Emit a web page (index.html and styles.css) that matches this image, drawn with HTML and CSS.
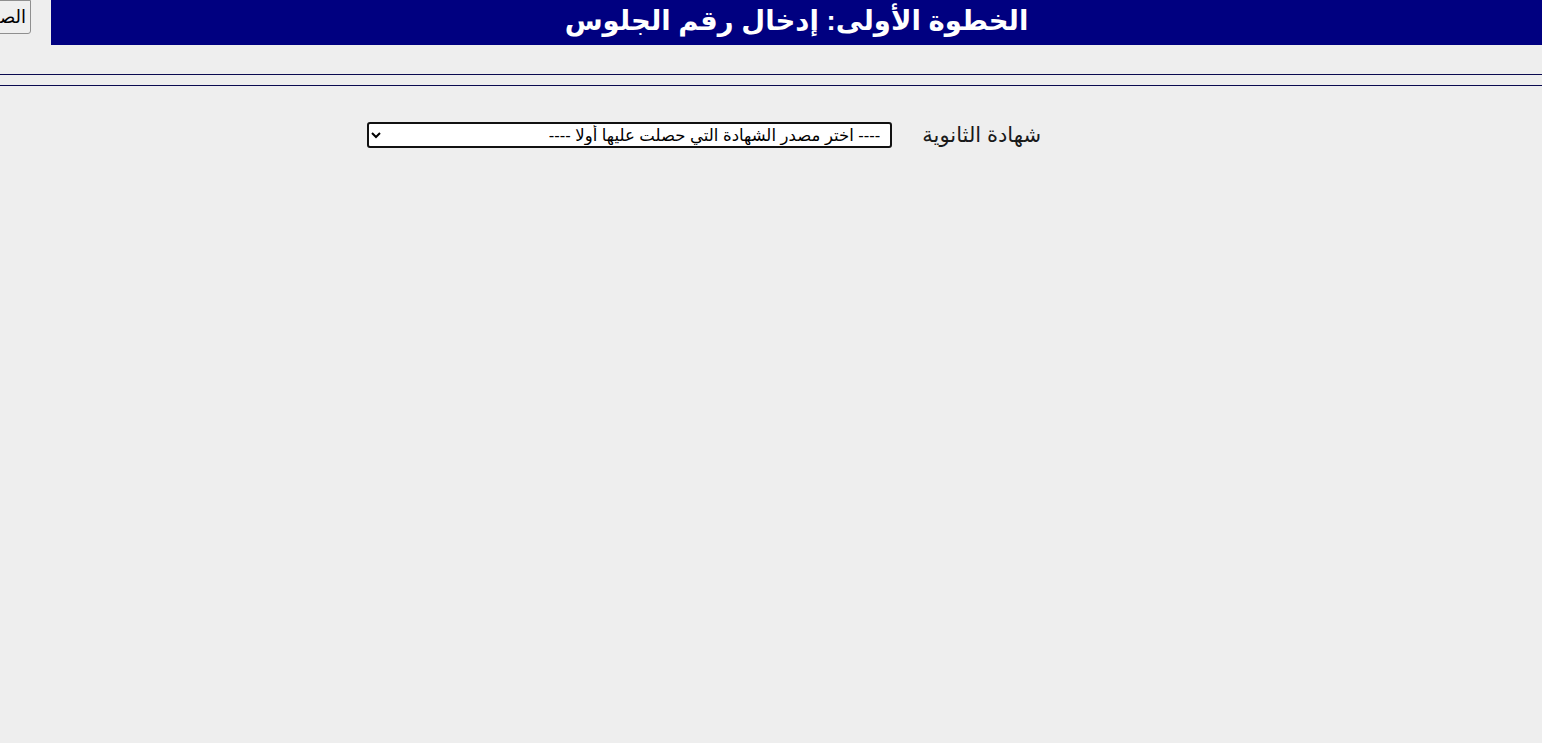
FILE: index.html
```html
<!DOCTYPE html>
<html lang="ar">
<head>
<meta charset="utf-8">
<title>الخطوة الأولى</title>
<link rel="stylesheet" href="styles.css">
</head>
<body>
<div class="top">
  <button class="home" type="button">الصفحة الرئيسية</button>
  <div class="banner">الخطوة الأولى: إدخال رقم الجلوس</div>
</div>
<div class="rule rule-a"></div>
<div class="rule rule-b"></div>
<div class="form-row">
  <label class="label" for="src">شهادة الثانوية</label>
  <select id="src" class="source">
    <option>---- اختر مصدر الشهادة التي حصلت عليها أولا ----</option>
  </select>
</div>
</body>
</html>
```

FILE: styles.css
```css
html, body {
  margin: 0;
  padding: 0;
  background: #eeeeee;
  overflow: hidden;
}
body {
  font-family: "Liberation Sans", Arial, "DejaVu Sans", sans-serif;
  color: #000;
  height: 743px;
}
.top {
  display: flex;
  align-items: flex-start;
  height: 45px;
}
.home {
  flex: 0 0 auto;
  width: 120px;
  height: 34px;
  margin-left: -89px;
  direction: rtl;
  text-align: right;
  padding: 0 4px 0 0;
  font-family: "Liberation Sans", Arial, "DejaVu Sans", sans-serif;
  font-size: 18px;
  background: #efefef;
  border: 1px solid #8f8f8f;
  border-radius: 0 0 3px 3px;
  color: #000;
  overflow: hidden;
  white-space: nowrap;
}
.banner {
  flex: 1 1 auto;
  margin-left: 20px;
  height: 45px;
  background: #000080;
  color: #ffffff;
  font-weight: bold;
  font-size: 27.5px;
  line-height: 42px;
  text-align: center;
  direction: rtl;
}
.rule {
  height: 1px;
  background: #0a0a50;
}
.rule-a { margin-top: 29px; }
.rule-b { margin-top: 10px; }
.form-row {
  direction: rtl;
  display: flex;
  align-items: center;
  gap: 32px;
  margin-top: 36px;
  padding-right: 501px;
}
.label {
  font-size: 21px;
  color: #1a1a1a;
  margin-left: -2px;
}
.source {
  width: 525px;
  height: 26px;
  font-family: "Liberation Sans", Arial, "DejaVu Sans", sans-serif;
  font-size: 16.5px;
  background: #ffffff;
  border: 2px solid #111;
  border-radius: 3px;
  color: #000;
  text-align: right;
  padding: 0 6px;
}
```
